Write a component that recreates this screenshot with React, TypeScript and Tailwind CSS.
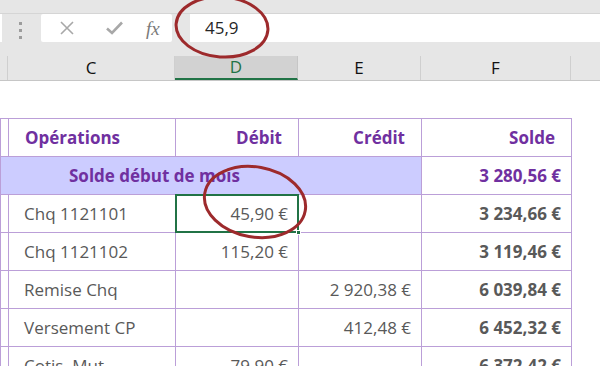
const rows = [
  { op: "Chq 1121101", debit: "45,90 €", credit: "", solde: "3 234,66 €", selected: true },
  { op: "Chq 1121102", debit: "115,20 €", credit: "", solde: "3 119,46 €" },
  { op: "Remise Chq", debit: "", credit: "2 920,38 €", solde: "6 039,84 €" },
  { op: "Versement CP", debit: "", credit: "412,48 €", solde: "6 452,32 €" },
  { op: "Cotis. Mut", debit: "79,90 €", credit: "", solde: "6 372,42 €" },
];

const cols = [
  { label: "", w: "w-[8px]" },
  { label: "C", w: "w-[167px]" },
  { label: "D", w: "w-[123px]", active: true },
  { label: "E", w: "w-[123px]" },
  { label: "F", w: "w-[150px]" },
  { label: "", w: "flex-1" },
];

const App = () => {
  return (
    <div className="relative w-[600px] h-[366px] overflow-hidden bg-white font-['Open_Sans',sans-serif] text-[17px]">
      {/* formula bar */}
      <div className="h-[56px] bg-[#e6e6e6] pt-[13px]">
        <div className="flex h-[30px] border-t border-[#d5d5d5]">
          <div className="relative w-[41px]">
            <div className="absolute left-0 top-0 h-[28px] w-[2px] bg-white" />
            <div className="absolute left-[19px] top-[8px] flex flex-col gap-[4px]">
              <span className="block w-[3px] h-[3px] bg-[#9c9c9c]" />
              <span className="block w-[3px] h-[3px] bg-[#9c9c9c]" />
              <span className="block w-[3px] h-[3px] bg-[#9c9c9c]" />
            </div>
          </div>
          <div className="flex items-center w-[131px] h-[28px] bg-white rounded-[2px]">
            <svg width="14" height="14" viewBox="0 0 14 14" className="ml-[19px]">
              <path d="M1 1 L13 13 M13 1 L1 13" stroke="#a8a8a8" strokeWidth="1.6" fill="none" />
            </svg>
            <svg width="17" height="14" viewBox="0 0 17 14" className="ml-[32px]">
              <path d="M1 7.5 L6 12 L16 1.5" stroke="#a8a8a8" strokeWidth="2.6" fill="none" />
            </svg>
            <span className="ml-[23px] font-['Liberation_Serif',serif] italic text-[19px] text-[#7a7a7a] leading-none">
              fx
            </span>
          </div>
          <div className="w-[18px]" />
          <div className="flex-1 h-[28px] bg-white flex items-center pl-[15px] text-[#262626] text-[17px]">
            45,9
          </div>
        </div>
      </div>

      {/* column headers */}
      <div className="flex h-[25px] bg-[#e6e6e6] border-b border-[#c6c6c6]">
        {cols.map((c, i) => (
          <div
            key={i}
            className={`${c.w} h-full flex items-center justify-center border-r ${
              c.active
                ? "bg-[#d2d2d2] border-[#c6c6c6] text-[#217346] border-b-2 border-b-[#217346]"
                : "border-[#cfcfcf] text-[#111]"
            } ${i === cols.length - 1 ? "border-r-0" : ""}`}
          >
            {c.label}
          </div>
        ))}
      </div>

      <div className="h-[37px]" />

      {/* table */}
      <table className="border-collapse table-fixed w-[571px] text-[#595959]">
        <colgroup>
          <col className="w-[8px]" />
          <col className="w-[167px]" />
          <col className="w-[123px]" />
          <col className="w-[123px]" />
          <col className="w-[150px]" />
        </colgroup>
        <tbody>
          <tr className="h-[38px] font-bold text-[#7030a0]">
            <td className="border border-[#bb9fd8]" />
            <td className="border border-[#bb9fd8] pl-[16px]">Opérations</td>
            <td className="border border-[#bb9fd8] text-right pr-[16px]">Débit</td>
            <td className="border border-[#bb9fd8] text-right pr-[16px]">Crédit</td>
            <td className="border border-[#bb9fd8] text-right pr-[16px]">Solde</td>
          </tr>
          <tr className="h-[38px] font-bold text-[#7030a0]">
            <td colSpan={4} className="border border-[#bb9fd8] bg-[#ccccff] pl-[68px]">
              Solde début de mois
            </td>
            <td className="border border-[#bb9fd8] text-right pr-[10px]">3 280,56 €</td>
          </tr>
          {rows.map((r) => (
            <tr key={r.op} className="h-[38px]">
              <td className="border border-[#bb9fd8]" />
              <td className="border border-[#bb9fd8] pl-[15px]">{r.op}</td>
              <td className="relative border border-[#bb9fd8] text-right pr-[10px]">
                {r.debit}
                {r.selected && (
                  <>
                    <div className="absolute -left-px -top-px -right-px -bottom-px border-2 border-[#217346]" />
                    <div className="absolute -right-[3px] -bottom-[3px] w-[5px] h-[5px] bg-[#217346] border border-white" />
                  </>
                )}
              </td>
              <td className="border border-[#bb9fd8] text-right pr-[10px]">{r.credit}</td>
              <td className="border border-[#bb9fd8] text-right pr-[10px] font-bold">{r.solde}</td>
            </tr>
          ))}
        </tbody>
      </table>

      {/* hand-drawn circles */}
      <svg className="absolute left-0 top-0 pointer-events-none" width="600" height="366">
        <ellipse cx="222" cy="27" rx="46" ry="30" fill="none" stroke="#9d2a2c" strokeWidth="3" transform="rotate(4 222 27)" />
        <ellipse cx="255" cy="202" rx="51" ry="35" fill="none" stroke="#9d2a2c" strokeWidth="3" transform="rotate(10 255 202)" />
      </svg>
    </div>
  );
};

export default App;
